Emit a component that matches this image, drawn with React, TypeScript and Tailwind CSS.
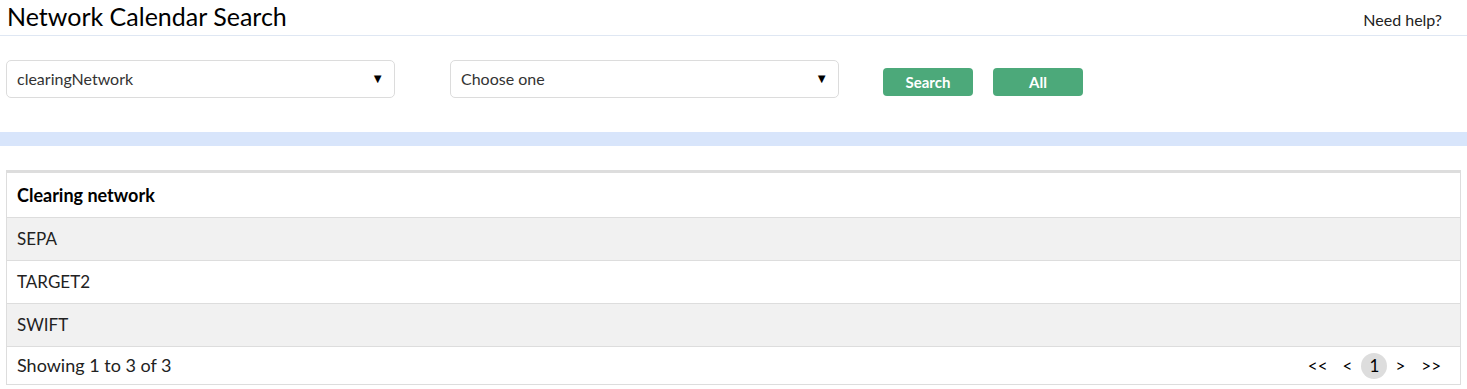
import { useState } from 'react'

const rows = ['SEPA', 'TARGET2', 'SWIFT']

function Select({ value }: { value: string }) {
  return (
    <div className="flex h-[38px] w-[389px] items-center justify-between rounded-[5px] border border-[#dcdcdc] bg-white pl-[10px] pr-[10px] text-[16px] text-[#333]">
      <span>{value}</span>
      <span className="text-[13px] text-black">▼</span>
    </div>
  )
}

export default function App() {
  const [page] = useState(1)

  return (
    <div className="min-h-screen bg-white font-['Lato',sans-serif] text-[#222]">
      <div className="flex h-[36px] items-start justify-between border-b border-[#dfe7f3] pl-[7px] pr-[25px]">
        <h1 className="mt-[1px] text-[25px] leading-[30px] text-black">Network Calendar Search</h1>
        <a className="mt-[8px] text-[16px] text-[#222]">Need help?</a>
      </div>

      <div className="flex items-start pl-[6px] pt-[24px]">
        <Select value="clearingNetwork" />
        <div className="ml-[55px]">
          <Select value="Choose one" />
        </div>
        <button className="ml-[44px] mt-[8px] h-[28px] w-[90px] rounded-[4px] bg-[#4ca97a] text-[15px] font-bold text-white">
          Search
        </button>
        <button className="ml-[20px] mt-[8px] h-[28px] w-[90px] rounded-[4px] bg-[#4ca97a] text-[15px] font-bold text-white">
          All
        </button>
      </div>

      <div className="mt-[34px] h-[14px] bg-[#d8e5fb]" />

      <div className="mx-[6px] mt-[24px] border-x border-b border-t-[3px] border-[#dddddd]">
        <div className="flex h-[45px] items-center border-b border-[#dddddd] px-[10px] text-[18px] font-bold text-black">
          Clearing network
        </div>
        {rows.map((r, i) => (
          <div
            key={r}
            className={
              i % 2 === 0
                ? 'flex h-[43px] items-center border-b border-[#dddddd] bg-[#f1f1f1] px-[10px] text-[17px]'
                : 'flex h-[43px] items-center border-b border-[#dddddd] bg-white px-[10px] text-[17px]'
            }
          >
            {r}
          </div>
        ))}
        <div className="flex h-[37px] items-center justify-between px-[10px] text-[18px]">
          <span>Showing 1 to 3 of 3</span>
          <div className="flex items-center text-[17px] text-black">
            <span className="mr-[15px]">&lt;&lt;</span>
            <span className="mr-[9px]">&lt;</span>
            <span className="flex h-[26px] w-[26px] items-center justify-center rounded-full bg-[#dddddd]">{page}</span>
            <span className="ml-[8px] mr-[16px]">&gt;</span>
            <span className="mr-[9px]">&gt;&gt;</span>
          </div>
        </div>
      </div>
    </div>
  )
}
